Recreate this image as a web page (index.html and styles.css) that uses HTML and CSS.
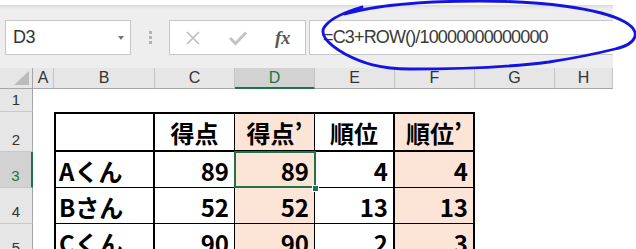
FILE: index.html
```html
<!DOCTYPE html>
<html lang="ja">
<head>
  <meta charset="UTF-8">
  <title>Excel - 順位</title>
  <link rel="stylesheet" href="styles.css">
</head>
<body>

  <div class="app">
    <div class="toolbar">
      <div class="namebox">
        <span>D3</span>
        <span class="arrow"></span>
      </div>
      <div class="grip"><i></i><i></i><i></i></div>
      <div class="fxbox">
        <span class="fxbtn">
          <svg width="16" height="16" viewBox="0 0 16 16"><path d="M2 2 L14 14 M14 2 L2 14" stroke="#bcbcbc" stroke-width="1.6" fill="none"/></svg>
        </span>
        <span class="fxbtn">
          <svg width="20" height="16" viewBox="0 0 20 16"><path d="M2 8 L7.5 13.5 L18 2.5" stroke="#c4c4c4" stroke-width="3" fill="none"/></svg>
        </span>
        <span class="fxbtn fx">fx</span>
      </div>
      <div class="formula">=C3+ROW()/10000000000000</div>
    </div>

    <div class="sheet">
      <!-- column headers -->
      <div class="ch corner"><span class="tri"></span></div>
      <div class="ch">A</div>
      <div class="ch">B</div>
      <div class="ch">C</div>
      <div class="ch sel">D</div>
      <div class="ch">E</div>
      <div class="ch">F</div>
      <div class="ch">G</div>
      <div class="ch">H</div>

      <!-- row 1 -->
      <div class="rh">1</div>
      <div></div><div></div><div></div><div></div><div></div><div></div><div></div><div></div>

      <!-- row 2 -->
      <div class="rh">2</div>
      <div></div>
      <div class="t b hdr"></div>
      <div class="t hdr">得点</div>
      <div class="t hdr peach">得点’</div>
      <div class="t e hdr">順位</div>
      <div class="t f hdr peach">順位’</div>
      <div></div><div></div>

      <!-- row 3 -->
      <div class="rh sel">3</div>
      <div></div>
      <div class="t b">Aくん</div>
      <div class="t num">89</div>
      <div class="t num peach active">89</div>
      <div class="t e num">4</div>
      <div class="t f num peach">4</div>
      <div></div><div></div>

      <!-- row 4 -->
      <div class="rh">4</div>
      <div></div>
      <div class="t b">Bさん</div>
      <div class="t num">52</div>
      <div class="t num peach">52</div>
      <div class="t e num">13</div>
      <div class="t f num peach">13</div>
      <div></div><div></div>

      <!-- row 5 -->
      <div class="rh">5</div>
      <div></div>
      <div class="t b">Cくん</div>
      <div class="t num">90</div>
      <div class="t num peach">90</div>
      <div class="t e num">2</div>
      <div class="t f num peach">3</div>
      <div></div><div></div>
    </div>
  </div>

  <!-- hand drawn mark around the formula -->
  <svg class="scribble" width="636" height="249" viewBox="0 0 636 249">
    <path d="M345 14 C380 4, 430 1, 480 1 C540 1, 600 8, 625 22 C642 32, 637 44, 615 49 C595 54, 575 58, 549 62 C510 67, 460 69, 410 69 C380 69, 362 63, 345 54 C326 43, 318 33, 326 25 C332 18, 345 12, 362 7"
          stroke="#1414e0" stroke-width="2.8" fill="none" stroke-linecap="round"/>
  </svg>

</body>
</html>
```

FILE: styles.css
```css
body {
  margin: 0;
  background: #fff;
  font-family: "Liberation Sans", Arial, sans-serif;
  overflow: hidden;
}
.app {
  width: 613px;
}
.toolbar {
  margin-top: 5px;
  height: 63px;
  box-sizing: border-box;
  padding: 15px 0 13px 5px;
  display: flex;
  background: linear-gradient(#dadada, #eeeeee 4px);
}
.namebox {
  width: 126px;
  box-sizing: border-box;
  border: 1px solid #c6c6c6;
  background: #fff;
  display: flex;
  align-items: center;
  padding-left: 7px;
  font-size: 18px;
  letter-spacing: -0.4px;
  color: #333;
}
.arrow {
  margin-left: auto;
  margin-right: 6px;
  border-left: 3.5px solid transparent;
  border-right: 3.5px solid transparent;
  border-top: 4px solid #777;
}
.grip {
  margin-left: 18px;
  width: 3px;
  display: flex;
  flex-direction: column;
  justify-content: center;
  gap: 2px;
}
.grip i {
  display: block;
  width: 3px;
  height: 3px;
  background: #b4b4b4;
}
.fxbox {
  margin-left: 17px;
  width: 137px;
  box-sizing: border-box;
  border: 1px solid #c6c6c6;
  background: #fff;
  display: flex;
  align-items: center;
}
.fxbtn {
  width: 45px;
  display: flex;
  justify-content: center;
  align-items: center;
}
.fx {
  font-family: "Liberation Serif", serif;
  font-style: italic;
  font-weight: bold;
  font-size: 19px;
  color: #595959;
  letter-spacing: -0.5px;
}
.formula {
  margin-left: 3px;
  flex: 1;
  border: 1px solid #c6c6c6;
  border-right: none;
  background: #fff;
  display: flex;
  align-items: center;
  padding-left: 13px;
  font-size: 18px;
  letter-spacing: -0.85px;
  color: #3a3a3a;
}
.sheet {
  display: grid;
  grid-template-columns: 33px 21px 101px 80px 80px 80px 80px 80px 58px;
  grid-template-rows: 21px 23px 40px 36px 36px 36px;
}
.ch {
  background: #e6e6e6;
  border-right: 1px solid #c4c4c4;
  border-bottom: 1px solid #a6a6a6;
  box-sizing: border-box;
  display: flex;
  justify-content: center;
  align-items: center;
  font-size: 16px;
  color: #333;
}
.ch:last-child {
  border-right: none;
}
.ch.sel {
  background: #d2d2d2;
  border-bottom: 2px solid #217346;
  color: #217346;
}
.corner {
  border-right: 1px solid #a6a6a6;
  position: relative;
}
.tri {
  position: absolute;
  right: 3px;
  bottom: 3px;
  border-left: 15px solid transparent;
  border-bottom: 14px solid #bcbcbc;
}
.rh {
  background: #e6e6e6;
  border-right: 1px solid #a6a6a6;
  border-bottom: 1px solid #c8c8c8;
  box-sizing: border-box;
  display: flex;
  justify-content: center;
  align-items: flex-end;
  padding-bottom: 3px;
  font-size: 15px;
  color: #333;
}
.rh.sel {
  background: #d2d2d2;
  border-right: 2px solid #217346;
  color: #217346;
}
.t {
  box-sizing: border-box;
  border-right: 1px solid #000;
  border-bottom: 1px solid #000;
  display: flex;
  align-items: flex-end;
  padding: 0 5px 4px 5px;
  font-family: "Noto Sans CJK JP", sans-serif;
  font-weight: bold;
  font-size: 24px;
  line-height: 24px;
  color: #000;
}
.t.b {
  border-left: 2px solid #000;
  border-right: 2px solid #000;
  padding-left: 3px;
}
.t.e,
.t.f {
  border-right: 2px solid #000;
}
.t.hdr {
  border-top: 2px solid #000;
  border-bottom: 2px solid #000;
  justify-content: center;
  padding-bottom: 5px;
}
.t.num {
  justify-content: flex-end;
}
.peach {
  background: #fce4d6;
}
.active {
  position: relative;
}
.active::after {
  content: "";
  position: absolute;
  left: -1px;
  top: -1px;
  right: -2px;
  bottom: -1px;
  border: 2px solid #217346;
  z-index: 2;
}
.active::before {
  content: "";
  position: absolute;
  right: -4px;
  bottom: -4px;
  width: 5px;
  height: 5px;
  background: #217346;
  box-shadow: 0 0 0 1px #fff;
  z-index: 3;
}
.scribble {
  position: absolute;
  left: 0;
  top: 0;
  pointer-events: none;
}
```
